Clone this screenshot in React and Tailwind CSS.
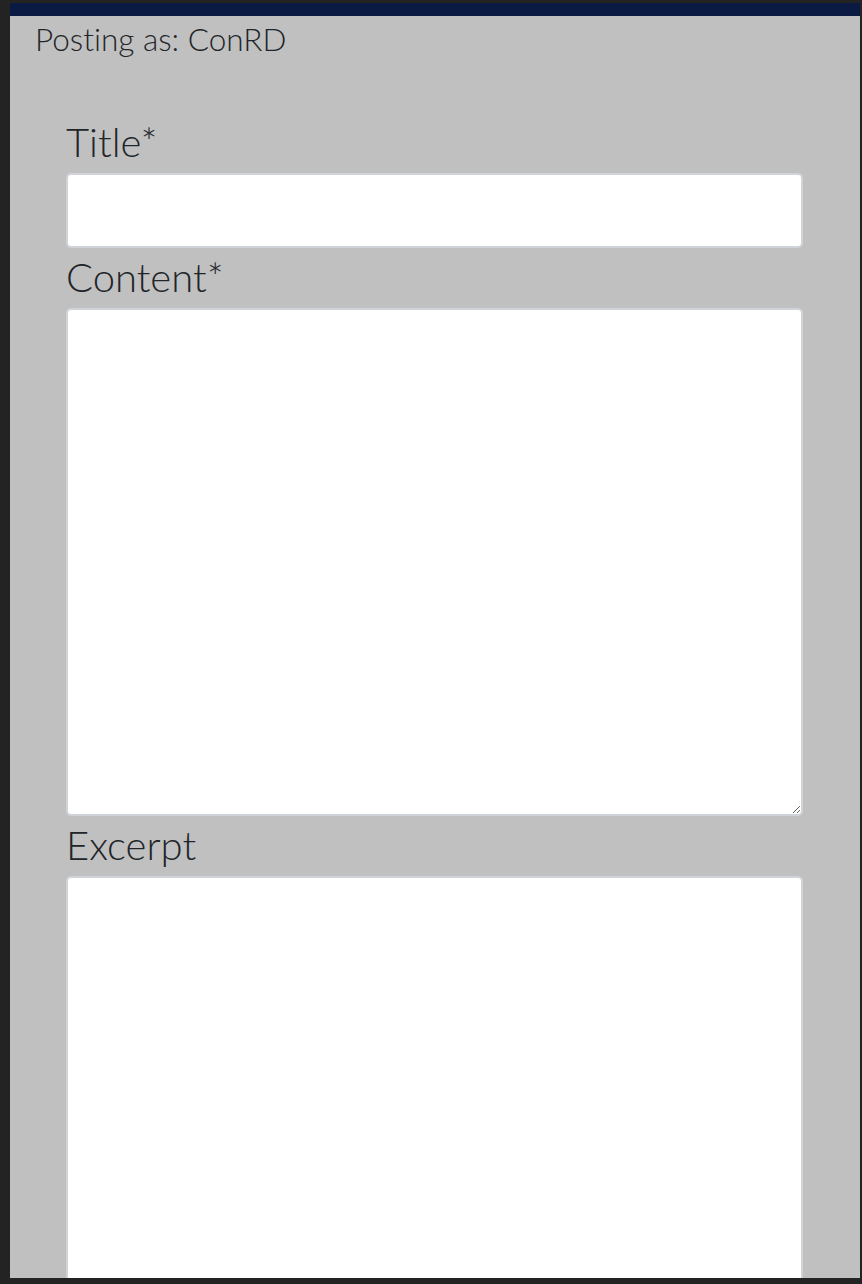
export default function App() {
  return (
    <div className="h-[1284px] overflow-hidden bg-[#232323] pt-[3px] pb-[6px] pl-[10px] pr-[2px] [font-variant-ligatures:none]" style={{ fontFamily: "Lato, 'Open Sans', sans-serif" }}>
      <div className="h-full overflow-hidden bg-[#c0c0c0] border-t-[13px] border-[#0b1a42]">
        <div className="pl-[25px] pt-[4px] text-[31.5px] leading-[38px] font-light text-[#212529]">Posting as: ConRD</div>
        <form className="pl-[56px] pr-[57px] pt-[60px] flex flex-col font-light text-[#212529]">
          <label className="text-[40px] leading-[48px] mb-[7px]">Title*</label>
          <input type="text" className="h-[75px] w-full rounded-[5px] border-2 border-[#d0d4d8] bg-white" />
          <label className="mt-[5px] text-[40px] leading-[48px] mb-[7px]">Content*</label>
          <textarea className="h-[508px] w-full rounded-[5px] border-2 border-[#d0d4d8] bg-white resize-y block" />
          <label className="mt-[5px] text-[40px] leading-[48px] mb-[7px]">Excerpt</label>
          <textarea className="h-[508px] w-full rounded-[5px] border-2 border-[#d0d4d8] bg-white resize-y block shrink-0" />
        </form>
      </div>
    </div>
  );
}
